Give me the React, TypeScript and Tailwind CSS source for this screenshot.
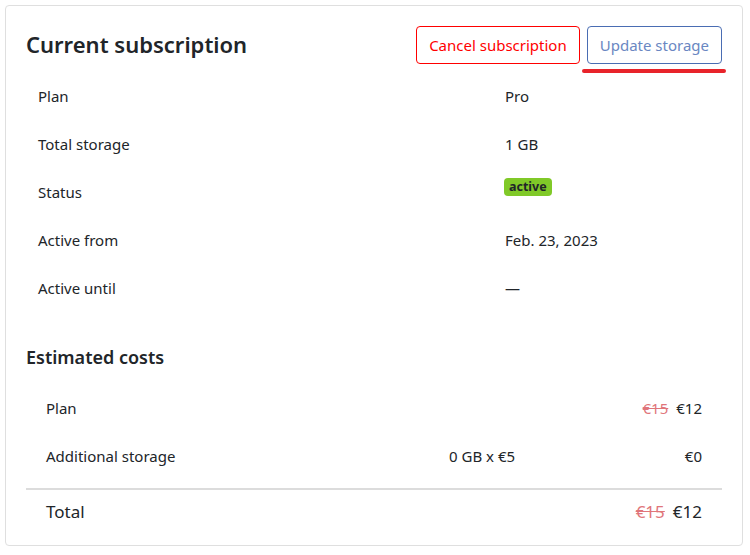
import React from 'react';

const rows = [
  { label: 'Plan', value: 'Pro' },
  { label: 'Total storage', value: '1 GB' },
  { label: 'Status', value: 'active' },
  { label: 'Active from', value: 'Feb. 23, 2023' },
  { label: 'Active until', value: '—' },
];

const Price: React.FC<{ old?: string; now: string }> = ({ old, now }) => (
  <span>
    {old && <s className="mr-2 text-[#e0757a] decoration-[#e0757a]">{old}</s>}
    {now}
  </span>
);

const App: React.FC = () => {
  return (
    <div
      className="min-h-[555px] bg-white p-[5px] text-[16px] text-[#212529]"
      style={{ fontFamily: '"Noto Sans", "Open Sans", sans-serif' }}>
      <div className="w-[738px] rounded-[4px] border border-[#dfdfdf] px-5 pt-5 pb-[11px]">
        <div className="flex h-[38px] items-center justify-between">
          <h4 className="-mt-[3px] text-[22px] font-semibold leading-none">Current subscription</h4>
          <div className="flex gap-[7px]">
            <button className="h-[38px] rounded-[4px] border border-[#ff0000] px-3 text-[15px] text-[#ff0000]">
              Cancel subscription
            </button>
            <div className="relative">
              <button className="h-[38px] rounded-[4px] border border-[#4a6db3] px-3 text-[15px] text-[#6a87c2]">
                Update storage
              </button>
              <div className="absolute -right-[4px] -bottom-[9px] -left-[5px] h-[4px] rounded-full bg-[#e8232a]"></div>
            </div>
          </div>
        </div>

        <div className="mt-2">
          {rows.map((r) => (
            <div key={r.label} className="grid h-12 grid-cols-[467px_1fr] items-center px-3 text-[15px]">
              <div>{r.label}</div>
              <div>
                {r.label === 'Status' ? (
                  <span className="relative -top-[7px] -left-[1px] inline-block rounded-[4px] bg-[#80c928] px-[5px] text-[12.5px] leading-[18px] font-bold">
                    {r.value}
                  </span>
                ) : (
                  r.value
                )}
              </div>
            </div>
          ))}
        </div>

        <h5 className="mt-[33px] text-[18px] leading-6 font-semibold">Estimated costs</h5>

        <div className="mt-[15px] text-[15px]">
          <div className="grid h-12 grid-cols-[403px_1fr_auto] items-center px-5">
            <div>Plan</div>
            <div></div>
            <Price old="€15" now="€12" />
          </div>
          <div className="grid h-12 grid-cols-[403px_1fr_auto] items-center px-5">
            <div>Additional storage</div>
            <div>0 GB x €5</div>
            <div>€0</div>
          </div>
          <div className="mt-2 h-[2px] bg-[#dcdcdc]"></div>
          <div className="flex h-[44px] items-center justify-between px-5 text-[17px]">
            <div>Total</div>
            <Price old="€15" now="€12" />
          </div>
        </div>
      </div>
    </div>
  );
};

export default App;
